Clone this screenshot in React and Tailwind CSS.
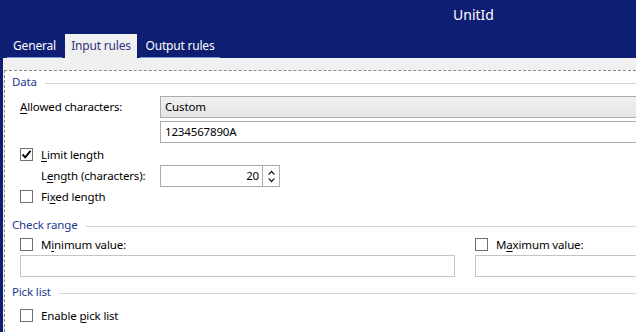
import React from "react";

const NAVY = "bg-[#0e1e73]";

function Check({ checked }) {
  return (
    <div className="w-[13px] h-[13px] border border-[#707070] bg-white flex items-center justify-center shrink-0">
      {checked && (
        <svg width="11" height="11" viewBox="0 0 11 11">
          <path d="M1.5 5.5 L4.2 8.3 L9.5 1.8" fill="none" stroke="#000" strokeWidth="1.9" />
        </svg>
      )}
    </div>
  );
}

function SectionHeader({ title }) {
  return (
    <div className="h-[22px] flex items-center pl-[7px]">
      <span className="text-[#23398d] leading-none">{title}</span>
      <div className="flex-1 h-px bg-[#d5d5d5] mt-[3px] ml-[8px]" />
    </div>
  );
}

function U({ children }) {
  return <span className="underline underline-offset-2 decoration-1">{children}</span>;
}

export default function App() {
  return (
    <div
      className="w-[636px] h-[332px] overflow-hidden bg-white flex flex-col text-[11.5px] tracking-[-0.15px] text-black"
      style={{ fontFamily: '"Segoe UI", "Noto Sans", "Open Sans", sans-serif' }}
    >
      {/* Header */}
      <div className={`${NAVY} h-[58px] shrink-0 flex flex-col`}>
        <div className="h-[34px] flex items-center pl-[453px] text-white text-[14px] tracking-normal leading-none pb-[4px]">
          UnitId
        </div>
        <div className="h-[24px] flex items-stretch pl-[7px] gap-[3px] text-[12px] tracking-[-0.2px]">
          <div className="w-[55px] flex items-center justify-center text-white border-b border-[#7d9bd0]">General</div>
          <div className="w-[72px] flex items-center justify-center bg-[#f0f0f0] text-[#33347f]">Input rules</div>
          <div className="w-[80px] flex items-center justify-center text-white border-b border-[#7d9bd0]">Output rules</div>
        </div>
      </div>

      {/* Body */}
      <div className="flex-1 flex">
        <div className={`w-[3px] ${NAVY}`} />
        <div className="flex-1 bg-[#f0f0f0] pt-[12px] pl-px flex flex-col">
          <div className="flex-1 bg-white border-t border-l border-dashed border-[#8a8a8a] flex flex-col">
            <SectionHeader title="Data" />
            <div className="h-[3px]" />
            <div className="h-[22px] flex items-center">
              <div className="w-[155px] pl-[15px]"><U>A</U>llowed characters:</div>
              <div className="flex-1 h-[22px] border border-[#acacac] bg-gradient-to-b from-[#f0f0f0] to-[#e5e5e5] flex items-center pl-[4px] -mr-[4px]">
                Custom
              </div>
            </div>
            <div className="h-[3px]" />
            <div className="h-[22px] flex">
              <div className="w-[155px]" />
              <div className="flex-1 h-[22px] border border-[#acacac] bg-white flex items-center pl-[4px] -mr-[4px]">
                1234567890A
              </div>
            </div>
            <div className="h-[3px]" />
            <div className="h-[17px] flex items-center pl-[15px] gap-[8px]">
              <Check checked />
              <span><U>L</U>imit length</span>
            </div>
            <div className="h-[2px]" />
            <div className="h-[22px] flex items-center">
              <div className="w-[155px] pl-[36px]">L<U>e</U>ngth (characters):</div>
              <div className="w-[120px] h-[22px] border border-[#acacac] flex">
                <div className="flex-1 flex items-center justify-end pr-[3px]">20</div>
                <div className="w-[17px] border-l border-[#acacac] flex flex-col items-center justify-center gap-[3px]">
                  <svg width="7" height="5" viewBox="0 0 7 5"><path d="M0 4.5 L3.5 0.5 L7 4.5 L5.5 4.5 L3.5 2.3 L1.5 4.5 Z" fill="#000" /></svg>
                  <svg width="7" height="5" viewBox="0 0 7 5"><path d="M0 0.5 L3.5 4.5 L7 0.5 L5.5 0.5 L3.5 2.7 L1.5 0.5 Z" fill="#000" /></svg>
                </div>
              </div>
            </div>
            <div className="h-[1px]" />
            <div className="h-[17px] flex items-center pl-[15px] gap-[8px]">
              <Check />
              <span>Fi<U>x</U>ed length</span>
            </div>
            <div className="h-[9px]" />
            <SectionHeader title="Check range" />
            <div className="h-[17px] flex items-center">
              <div className="w-[470px] flex items-center pl-[15px] gap-[8px]">
                <Check />
                <span>M<U>i</U>nimum value:</span>
              </div>
              <div className="flex items-center gap-[8px]">
                <Check />
                <span>M<U>a</U>ximum value:</span>
              </div>
            </div>
            <div className="h-[2px]" />
            <div className="h-[22px] flex">
              <div className="w-[470px] pl-[15px]">
                <div className="w-[435px] h-[22px] border border-[#c4c4c4]" />
              </div>
              <div className="flex-1 h-[22px] border border-[#c4c4c4] -mr-[4px]" />
            </div>
            <div className="h-[4px]" />
            <SectionHeader title="Pick list" />
            <div className="h-[4px]" />
            <div className="h-[17px] flex items-center pl-[15px] gap-[8px]">
              <Check />
              <span>Enable <U>p</U>ick list</span>
            </div>
          </div>
        </div>
      </div>
    </div>
  );
}
